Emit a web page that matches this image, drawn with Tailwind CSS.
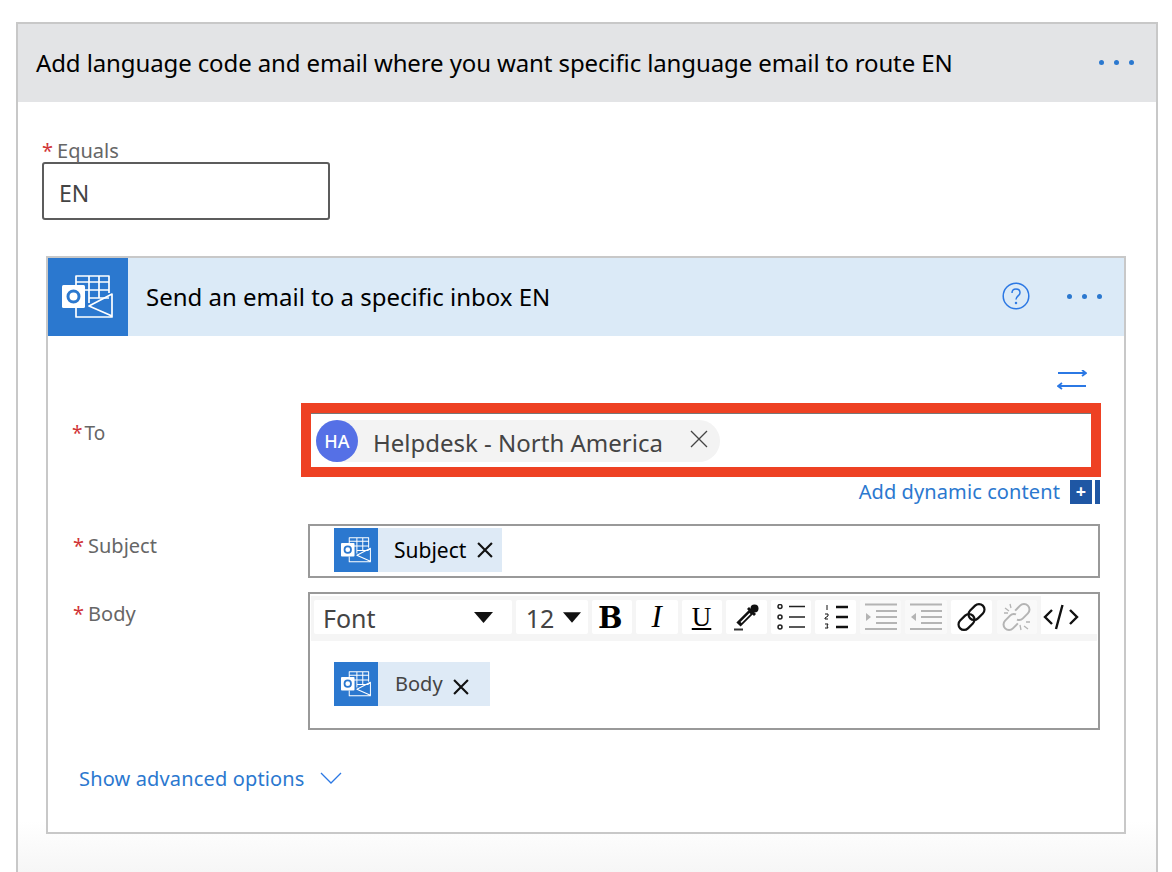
<!DOCTYPE html>
<html lang="en">
<head>
    <meta charset="UTF-8">
    <title>Send an email</title>
    <script src="https://cdn.jsdelivr.net/npm/@tailwindcss/browser@4"></script>
</head>
<body class="h-[872px] overflow-hidden bg-white font-['Noto_Sans',sans-serif]">
    <svg class="hidden">
        <symbol id="outlook" viewBox="0 0 51 44">
            <g fill="none" stroke="#fff" stroke-width="1.700" stroke-linejoin="round">
                <path d="M14 10V1h33v17M14 7h33M22 15h25M27 1v27M37 1v22M27 23h20"/>
                <path d="M14 33v9h36V19L27 31l23 10"/>
            </g>
            <rect x="0" y="10" width="23" height="23" rx="1.500" fill="#fff"/>
            <circle cx="11.500" cy="21.500" r="5.500" fill="none" stroke="#2b78cf" stroke-width="3"/>
        </symbol>
    </svg>

    <div class="ml-4 mt-[22px] w-[1142px] h-[850px] border-2 border-b-0 border-[#c8c8c8] bg-linear-to-b from-white from-[94%] to-[#f6f6f6]">
        <!-- outer header -->
        <div class="h-[78px] bg-[#e3e4e6] flex items-center justify-between pl-[18px] pr-[22px]">
            <h1 class="text-[24px] text-black tracking-[-0.115px]">Add language code and email where you want specific language email to route EN</h1>
            <div class="flex gap-[10px] mb-[2px]">
                <span class="w-[5px] h-[5px] rounded-full bg-[#2b78cf]"></span>
                <span class="w-[5px] h-[5px] rounded-full bg-[#2b78cf]"></span>
                <span class="w-[5px] h-[5px] rounded-full bg-[#2b78cf]"></span>
            </div>
        </div>

        <!-- equals -->
        <div class="pl-6 pt-[36px]">
            <label class="block h-[24px] leading-[26px] text-[20px] text-[#666]"><span class="text-[#d13438] mr-[4px]">*</span>Equals</label>
            <div class="w-[288px] h-[58px] border-2 border-[#5c5c5c] rounded-[3px] flex items-center pl-[15px] pt-[5px] text-[23px] text-[#444]">EN</div>
        </div>

        <!-- action card -->
        <div class="ml-7 mt-9 w-[1080px] h-[578px] border-2 border-[#c8c8c8] bg-white">
            <div class="h-[78px] bg-[#dbeaf7] flex items-center">
                <div class="w-[80px] h-[78px] bg-[#2b78cf] flex items-center pl-[14px]">
                    <svg class="w-[51px] h-[44px]"><use href="#outlook"/></svg>
                </div>
                <h2 class="ml-[18px] flex-1 text-[24px] text-black">Send an email to a specific inbox EN</h2>
                <svg class="w-[28px] h-[28px] mr-[37px] mb-[2px]" viewBox="0 0 28 28" fill="none" stroke="#2b78e4" stroke-width="1.500">
                    <circle cx="14" cy="14" r="12.800"/>
                    <path d="M10 11c0-2.500 1.800-4 4-4s4 1.500 4 3.700c0 3.300-4 3-4 6.800"/>
                    <circle cx="14" cy="21" r="0.500"/>
                </svg>
                <div class="flex gap-[10px] mr-[22px] mb-[2px]">
                    <span class="w-[5px] h-[5px] rounded-full bg-[#2b78cf]"></span>
                    <span class="w-[5px] h-[5px] rounded-full bg-[#2b78cf]"></span>
                    <span class="w-[5px] h-[5px] rounded-full bg-[#2b78cf]"></span>
                </div>
            </div>

            <div class="flex justify-end pt-[34px] pr-[37px] h-[67px]">
                <svg class="w-[30px] h-[20px]" viewBox="0 0 30 20" fill="none" stroke="#2b78e4" stroke-width="1.800">
                    <path d="M1 3h28M25 0l4 3-4 3"/>
                    <path d="M29 16H1M5 13l-4 3 4 3"/>
                </svg>
            </div>

            <!-- To -->
            <div class="flex">
                <div class="w-[253px] pl-[24px] pt-[17px] text-[19px] leading-[26px] text-[#666]"><span class="text-[#d13438] mr-[2px]">*</span>To</div>
                <div class="w-[800px] h-[74px] border-[10px] border-[#ee4123]">
                    <div class="h-full bg-white border-t border-[#777] pl-[5px] pt-[6px]">
                        <div class="inline-flex items-center w-[404px] h-[42px] bg-[#f3f3f3] rounded-full">
                            <div class="w-[42px] h-[42px] rounded-full bg-[#5570e6] text-white text-[18px] font-medium flex items-center justify-center">HA</div>
                            <span class="ml-[15px] pt-[3px] text-[24px] text-[#444]">Helpdesk - North America</span>
                            <svg class="w-[18px] h-[18px] ml-auto mr-[12px] mb-[4px]" viewBox="0 0 18 18" stroke="#444" stroke-width="1.300"><path d="M1 1l16 16M17 1L1 17"/></svg>
                        </div>
                    </div>
                </div>
            </div>

            <div class="flex justify-end items-center h-[30px] pr-[24px]">
                <span class="text-[#2b78cf] text-[20px] tracking-[0.1px]">Add dynamic content</span>
                <div class="ml-[10px] w-[22px] h-[24px] bg-[#1f57a4] text-white font-bold text-[18px] leading-[23px] text-center">+</div>
                <div class="ml-[1px] w-[1px] h-[24px] bg-white"></div>
                <div class="ml-[1px] w-[5px] h-[24px] bg-[#1f57a4]"></div>
            </div>

            <!-- Subject -->
            <div class="flex mt-[17px]">
                <div class="w-[260px] pl-[25px] pt-[9px] text-[20px] leading-[26px] text-[#666]"><span class="text-[#d13438] mr-[4px]">*</span>Subject</div>
                <div class="w-[792px] h-[54px] border-2 border-[#999] pl-[24px] pt-[2px]">
                    <div class="inline-flex items-center h-[44px] bg-[#deeaf6]">
                        <div class="w-[44px] h-[44px] bg-[#2b78cf] flex items-center justify-center"><svg class="w-[30px] h-[26px]"><use href="#outlook"/></svg></div>
                        <span class="ml-[16px] pt-[2px] text-[21px] text-black">Subject</span>
                        <svg class="w-[16px] h-[16px] ml-[11px] mr-[9px]" viewBox="0 0 15 15" stroke="#111" stroke-width="2"><path d="M1 1l13 13M14 1L1 14"/></svg>
                    </div>
                </div>
            </div>

            <!-- Body -->
            <div class="flex mt-[14px]">
                <div class="w-[260px] pl-[25px] pt-[9px] text-[20px] leading-[26px] text-[#666]"><span class="text-[#d13438] mr-[4px]">*</span>Body</div>
                <div class="w-[792px] h-[138px] border-2 border-[#999]">
                    <div class="mt-[2px] ml-[1px] w-[786px] h-[45px] bg-[#f5f5f5] flex gap-[4px] pl-[3px] py-[4px] pb-[7px]">
                        <div class="w-[198px] bg-white rounded-[2px] flex items-center justify-between pl-[9px] pr-[19px] text-[25px] text-[#444]"><span class="pt-[3px]">Font</span><svg class="w-[19px] h-[11px]" viewBox="0 0 19 11"><path d="M0 0h19L9.500 11z" fill="#111"/></svg></div>
                        <div class="w-[72px] bg-white rounded-[2px] flex items-center justify-between pl-[10px] pr-[7px] text-[25px] text-[#444]"><span class="pt-[3px]">12</span><svg class="w-[18px] h-[11px]" viewBox="0 0 19 11"><path d="M0 0h19L9.500 11z" fill="#111"/></svg></div>
                        <div class="w-[40px] pr-[3px] pt-[2px] bg-white rounded-[2px] flex items-center justify-center font-['DejaVu_Serif',serif] font-bold text-[29px] leading-[30px] text-black">B</div>
                        <div class="w-[42px] bg-white rounded-[2px] flex items-center justify-center font-['Liberation_Serif',serif] italic text-[31px] text-black">I</div>
                        <div class="w-[40px] bg-white rounded-[2px] flex items-center justify-center font-['Liberation_Serif',serif] underline text-[27px] text-black">U</div>
                        <div class="w-[42px] bg-white rounded-[2px] flex items-center justify-center">
                            <svg class="w-[28px] h-[28px]" viewBox="0 0 28 28" fill="none" stroke="#111">
                                <path d="M20 8L6.500 21.500" stroke-width="6"/>
                                <path d="M18 10.500L9 19.500" stroke="#fff" stroke-width="1.600"/>
                                <path d="M16 5l7 7" stroke-width="2.800"/>
                                <circle cx="22.500" cy="5.500" r="4" fill="#111" stroke="none"/>
                                <path d="M2 26.500h9" stroke="#333" stroke-width="2"/>
                            </svg>
                        </div>
                        <div class="w-[40px] bg-white rounded-[2px] flex items-center justify-center">
                            <svg class="w-[30px] h-[26px]" viewBox="0 0 30 26" fill="none" stroke="#222"><circle cx="4" cy="2.500" r="2" stroke-width="1.500"/><circle cx="4" cy="13" r="2" stroke-width="1.500"/><circle cx="4" cy="23" r="2" stroke-width="1.500"/><path d="M13 2.500h16M13 13h16M13 23h16" stroke-width="1.600"/></svg>
                        </div>
                        <div class="w-[41px] bg-white rounded-[2px] flex items-center justify-center">
                            <svg class="w-[28px] h-[26px]" viewBox="0 0 28 26" fill="none" stroke="#111"><path d="M14 3h12M14 13h12M14 23h12" stroke-width="2.400"/><path d="M5 1v5M3 10h3v2l-3 2v1h3M3 20h3l-1 2 1 2H3" stroke-width="1"/></svg>
                        </div>
                        <div class="w-[41px] bg-[#f9f9f9] rounded-[2px] flex items-center justify-center">
                            <svg class="w-[34px] h-[28px]" viewBox="0 0 34 28" fill="none" stroke="#b4b4b4" stroke-width="2"><path d="M1 1.500h32M12 8h21M12 14h21M12 20h21M1 26h32"/><path d="M2 10l5 4-5 4z" fill="#b4b4b4" stroke="none"/></svg>
                        </div>
                        <div class="w-[42px] bg-[#f9f9f9] rounded-[2px] flex items-center justify-center">
                            <svg class="w-[34px] h-[28px]" viewBox="0 0 34 28" fill="none" stroke="#b4b4b4" stroke-width="2"><path d="M1 1.500h32M12 8h21M12 14h21M12 20h21M1 26h32"/><path d="M7 10l-5 4 5 4z" fill="#b4b4b4" stroke="none"/></svg>
                        </div>
                        <div class="w-[41px] bg-white rounded-[2px] flex items-center justify-center">
                            <svg class="w-[30px] h-[30px]" viewBox="0 0 30 30" fill="none" stroke="#111" stroke-width="2.200">
                                <rect x="10.500" y="4.500" width="18" height="11" rx="5.500" transform="rotate(-45 19.500 10)"/>
                                <rect x="0.500" y="14.500" width="18" height="11" rx="5.500" transform="rotate(-45 9.500 20)"/>
                            </svg>
                        </div>
                        <div class="w-[40px] ml-[1px] bg-[#f9f9f9] rounded-[2px] flex items-center justify-center">
                            <svg class="w-[30px] h-[30px]" viewBox="0 0 30 30" fill="none" stroke="#b4b4b4" stroke-width="2">
                                <rect x="10.500" y="4.500" width="18" height="11" rx="5.500" stroke-dasharray="37 13" transform="rotate(-45 19.500 10)"/>
                                <rect x="0.500" y="14.500" width="18" height="11" rx="5.500" stroke-dasharray="37 13" transform="rotate(135 9.500 20)"/>
                                <path d="M3 6l4 3M8 2l1 4M2 11h4M22 24l4 3M18 23l1 5M24 20h4" stroke-width="1.300"/>
                            </svg>
                        </div>
                        <div class="w-[56px] -mt-[4px] bg-white flex items-center justify-start pl-[2px]">
                            <svg class="w-[36px] h-[28px] mt-[4px]" viewBox="0 0 36 28" fill="none" stroke="#111" stroke-width="2.400"><path d="M9 7l-7 7 7 7M27 7l7 7-7 7M19.500 2L13 26"/></svg>
                        </div>
                    </div>
                    <div class="pl-[24px] pt-[21px]">
                        <div class="inline-flex items-center h-[44px] bg-[#deeaf6]">
                            <div class="w-[44px] h-[44px] bg-[#2b78cf] flex items-center justify-center"><svg class="w-[30px] h-[26px]"><use href="#outlook"/></svg></div>
                            <span class="ml-[17px] text-[20px] text-[#444]">Body</span>
                            <svg class="w-[16px] h-[16px] ml-[10px] mr-[21px] mt-[5px]" viewBox="0 0 15 15" stroke="#111" stroke-width="2"><path d="M1 1l13 13M14 1L1 14"/></svg>
                        </div>
                    </div>
                </div>
            </div>

            <div class="flex items-center mt-[33px] pl-[31px]">
                <span class="text-[#2b78cf] text-[20px] tracking-[0.15px] leading-[32px]">Show advanced options</span>
                <svg class="w-[22px] h-[12px] ml-[15px] mb-[2px]" viewBox="0 0 22 12" fill="none" stroke="#2b78e4" stroke-width="1.300"><path d="M1 1l10 10L21 1"/></svg>
            </div>
        </div>
    </div>
</body>
</html>
